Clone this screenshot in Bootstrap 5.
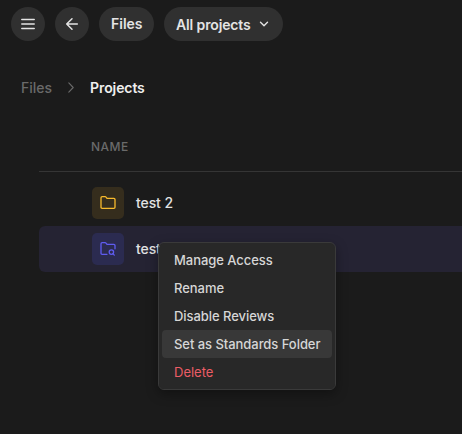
<!DOCTYPE html>
<html lang="en" data-bs-theme="dark">
<head>
<meta charset="utf-8">
<meta name="viewport" content="width=device-width, initial-scale=1">
<title>Projects</title>
<link href="https://cdn.jsdelivr.net/npm/bootstrap@5.3.0/dist/css/bootstrap.min.css" rel="stylesheet">
<style>
body { background: #1b1b1b; color: #e2e2e2; font: 500 14px/20px Inter, sans-serif; letter-spacing: -.1px; height: 100vh; overflow: hidden; }
svg { display: block; fill: none; stroke: currentColor; stroke-linecap: round; stroke-linejoin: round; }
.topbar { padding: 7px 11px 0; gap: 10px; }
.pill { --bs-btn-color: #e4e4e4; --bs-btn-bg: #303030; --bs-btn-hover-bg: #3a3a3a; --bs-btn-border-width: 0; --bs-btn-padding-y: 0; --bs-btn-padding-x: 12px; --bs-btn-font-size: 14px; --bs-btn-font-weight: 600; --bs-btn-line-height: 20px; height: 34px; }
.pill-icon { --bs-btn-padding-x: 0; width: 34px; }
.pill-files { width: 55px; }
.pill-filter { width: 119px; }
.pill-filter span { padding-top: 2px; letter-spacing: -.13px; }
.pill-filter svg { margin-left: 7px; }
.crumbs { --bs-breadcrumb-margin-bottom: 0; padding: 37px 21px 0; }
.crumbs a { letter-spacing: 0; }
.crumbs a, .muted { color: #6a6a6a; }
.crumbs .active { color: #efefef; font-weight: 600; }
.files { padding: 39px 0 0 39px; }
.files-head { height: 35px; padding-left: 52px; font-size: 12px; letter-spacing: .45px; border-bottom: 1px solid #353535; margin-bottom: 8px; }
.file-row { height: 46px; padding-left: 53px; gap: 12px; border-radius: 6px 0 0 6px; }
.file-row.selected { background: #252333; }
.folder { width: 32px; height: 32px; border-radius: 5px; }
.folder-amber { background: #352d1d; color: #f8ba2c; }
.folder-indigo { background: #2b2b50; color: #5f5cf0; }
.ctx { --bs-dropdown-bg: #282828; --bs-dropdown-border-color: #3a3a3a; --bs-dropdown-border-radius: 6px; --bs-dropdown-padding-y: 3px; --bs-dropdown-padding-x: 3px; --bs-dropdown-item-padding-x: 12px; --bs-dropdown-item-padding-y: 4px; --bs-dropdown-link-color: #d6d6d6; --bs-dropdown-link-hover-bg: #383838; --bs-dropdown-link-active-bg: #383838; --bs-dropdown-link-active-color: #d6d6d6; left: 158px; top: 242px; width: 178px; box-shadow: 0 4px 12px rgba(0,0,0,.35); }
.ctx .dropdown-item { font-weight: 500; font-size: 13px; line-height: 20px; letter-spacing: -.05px; border-radius: 4px; }
.ctx .delete { color: #ec5d66; font-weight: 400; letter-spacing: 0; }
</style>
<script src="https://cdn.jsdelivr.net/npm/bootstrap@5.3.0/dist/js/bootstrap.bundle.min.js"></script>
</head>
<body class="position-relative">
<header class="topbar d-flex">
  <button class="btn pill pill-icon rounded-pill d-flex align-items-center justify-content-center" aria-label="Menu"><svg width="16" height="16" viewBox="0 0 16 16" stroke-width="1.5"><path d="M1.8 3.5h12.4M1.8 8h12.4M1.8 12.5h12.4"/></svg></button>
  <button class="btn pill pill-icon rounded-pill d-flex align-items-center justify-content-center" aria-label="Back"><svg width="16" height="16" viewBox="0 0 16 16" stroke-width="1.5"><path d="M13.3 8H2.7M8 2.8 2.7 8 8 13.2"/></svg></button>
  <button class="btn pill pill-files rounded-pill">Files</button>
  <button class="btn pill pill-filter rounded-pill d-flex align-items-center text-nowrap"><span>All projects</span><svg class="flex-shrink-0" width="12" height="12" viewBox="0 0 12 12" stroke-width="1.4"><path d="M2.5 4.3 6 7.7 9.5 4.3"/></svg></button>
</header>
<nav class="breadcrumb crumbs d-flex align-items-center" aria-label="breadcrumb">
  <a class="text-decoration-none" href="#">Files</a>
  <svg class="muted mx-3" width="6" height="12" viewBox="0 0 6 12" stroke-width="1.1"><path d="m.8.8 4.4 4.7L.8 10.2"/></svg>
  <span class="active">Projects</span>
</nav>
<main class="files">
  <div class="files-head muted">NAME</div>
  <div class="file-row d-flex align-items-center">
    <span class="folder folder-amber d-flex align-items-center justify-content-center"><svg width="16" height="16" viewBox="0 0 16 16" stroke-width="1.3"><path d="M1 12.2V2.8q0-1.1 1.1-1.1h3q.5 0 .9.5l1 1.2h6.9Q15 3.4 15 4.5v7.7q0 1.1-1.1 1.1H2.1Q1 13.3 1 12.2Z"/></svg></span>
    <span>test 2</span>
  </div>
  <div class="file-row selected d-flex align-items-center">
    <span class="folder folder-indigo d-flex align-items-center justify-content-center"><svg width="16" height="16" viewBox="0 0 16 16" stroke-width="1.3"><path d="M7 13.3H2.1Q1 13.3 1 12.2V2.8q0-1.1 1.1-1.1h3q.5 0 .9.5l1 1.2h6.9Q15 3.4 15 4.5v3.3M13 12.8l1.3 1.3"/><circle cx="11.4" cy="11.1" r="2.2"/></svg></span>
    <span>test</span>
  </div>
</main>
<div class="dropdown-menu ctx d-block">
  <a class="dropdown-item" href="#">Manage Access</a>
  <a class="dropdown-item" href="#">Rename</a>
  <a class="dropdown-item" href="#">Disable Reviews</a>
  <a class="dropdown-item active" href="#">Set as Standards Folder</a>
  <a class="dropdown-item delete" href="#">Delete</a>
</div>
</body>
</html>
